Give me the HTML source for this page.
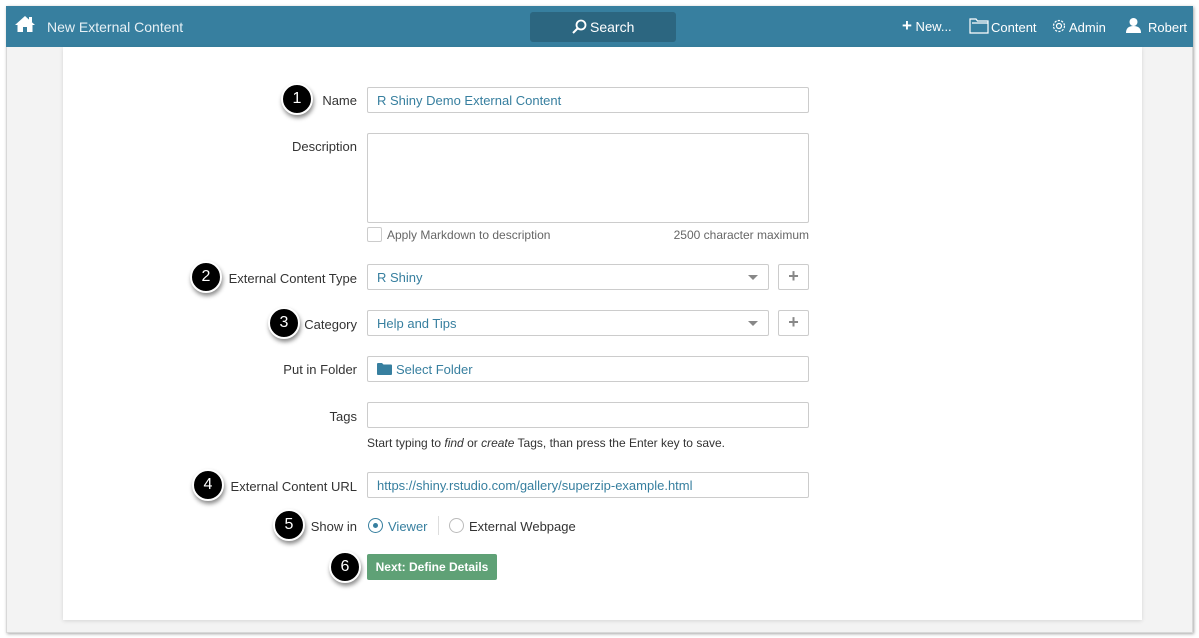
<!DOCTYPE html>
<html><head><meta charset="utf-8"><style>
*{box-sizing:border-box;margin:0;padding:0}
body{width:1199px;height:638px;background:#fff;font-family:"Liberation Sans",Arial,sans-serif;position:relative;overflow:hidden;font-size:13px;color:#333}
.win{position:absolute;left:6px;top:6px;width:1187px;height:627px;background:#f3f3f3;border:1px solid #d8d8d8;box-shadow:1px 1px 3px rgba(0,0,0,.35)}
.hdr{position:absolute;left:6px;top:6px;width:1187px;height:41px;background:#377f9f}
.card{position:absolute;left:63px;top:47px;width:1079px;height:573px;background:#fff;box-shadow:0 1px 4px rgba(0,0,0,.12)}
.a{position:absolute;white-space:nowrap}
.lbl{position:absolute;text-align:right;right:842px;font-size:13px;color:#333}
.inp{position:absolute;left:367px;width:442px;height:26px;border:1px solid #ccc;border-radius:2px;color:#377f9f;padding:5px 9px;font-size:13px}
.plus{position:absolute;left:778px;width:31px;height:26px;border:1px solid #ccc;border-radius:2px;color:#888;font-size:18px;font-weight:bold;text-align:center;line-height:23px}
.caret{position:absolute;right:10px;top:10px;width:0;height:0;border-left:5px solid transparent;border-right:5px solid transparent;border-top:5px solid #888}
.num{position:absolute;width:32px;height:32px;border-radius:50%;background:#000;border:2px solid #fff;box-shadow:1px 3px 4px rgba(0,0,0,.45);color:#fff;font-size:16px;text-align:center;line-height:28px}
.nav{color:#fff;font-size:13px}
</style></head><body>
<div class="win"></div>
<div class="hdr"></div>
<svg class="a" style="left:14px;top:15px" width="22" height="18" viewBox="0 0 22 18"><path d="M11 1 L1 10 L3.5 10 L3.5 17 L9 17 L9 12 L13 12 L13 17 L18.5 17 L18.5 10 L21 10 Z" fill="#fff"/><rect x="15" y="2" width="3" height="5" fill="#fff"/></svg>
<div class="a nav" style="left:47px;top:19px;font-size:14px;color:#e6f0f5">New External Content</div>
<div class="a" style="left:530px;top:12px;width:146px;height:30px;background:#2c6680;border-radius:3px"></div>
<svg class="a" style="left:571px;top:19px" width="16" height="16" viewBox="0 0 16 16"><circle cx="10" cy="6" r="4.5" fill="none" stroke="#fff" stroke-width="1.8"/><path d="M7 9 L2 14" stroke="#fff" stroke-width="2"/></svg>
<div class="a nav" style="left:590px;top:19px;font-size:14px">Search</div>
<div class="a nav" style="left:902px;top:19px"><b style="font-size:17px;line-height:12px">+</b> New...</div>
<svg class="a" style="left:969px;top:18px" width="20" height="16" viewBox="0 0 20 16"><path d="M1 1 H7 L8.5 3 H19 V15 H1 Z M3 5 H19" fill="none" stroke="#fff" stroke-width="1.2"/></svg>
<div class="a nav" style="left:991px;top:20px">Content</div>
<svg class="a" style="left:1051px;top:18px" width="16" height="16" viewBox="0 0 16 16"><circle cx="8" cy="8" r="2.5" fill="none" stroke="#fff" stroke-width="1.2"/><circle cx="8" cy="8" r="5.5" fill="none" stroke="#fff" stroke-width="1.2" stroke-dasharray="2.2 1.3"/></svg>
<div class="a nav" style="left:1069px;top:20px">Admin</div>
<svg class="a" style="left:1126px;top:17px" width="15" height="16" viewBox="0 0 15 16"><circle cx="7.5" cy="5" r="4" fill="#fff"/><path d="M0 16 Q0 9 7.5 9 Q15 9 15 16 Z" fill="#fff"/></svg>
<div class="a nav" style="left:1148px;top:20px">Robert</div>

<div class="card"></div>

<div class="lbl" style="top:93px">Name</div>
<div class="inp" style="top:87px">R Shiny Demo External Content</div>

<div class="lbl" style="top:139px">Description</div>
<div class="inp" style="top:133px;height:90px"></div>
<div class="a" style="left:367px;top:227px;width:15px;height:15px;border:1px solid #ccc;border-radius:2px"></div>
<div class="a" style="left:387px;top:228px;font-size:12px;color:#666">Apply Markdown to description</div>
<div class="a" style="right:390px;top:228px;font-size:12px;color:#666">2500 character maximum</div>

<div class="lbl" style="top:271px">External Content Type</div>
<div class="inp" style="top:264px;width:402px">R Shiny<div class="caret"></div></div>
<div class="plus" style="top:264px">+</div>

<div class="lbl" style="top:317px">Category</div>
<div class="inp" style="top:310px;width:402px">Help and Tips<div class="caret"></div></div>
<div class="plus" style="top:310px">+</div>

<div class="lbl" style="top:362px">Put in Folder</div>
<div class="inp" style="top:356px"><svg style="vertical-align:-1px;margin-right:4px" width="15" height="12" viewBox="0 0 15 12"><path d="M0 1 Q0 0 1 0 H5 L6.5 1.5 H14 Q15 1.5 15 2.5 V11 Q15 12 14 12 H1 Q0 12 0 11 Z" fill="#377f9f"/></svg>Select Folder</div>

<div class="lbl" style="top:409px">Tags</div>
<div class="inp" style="top:402px"></div>
<div class="a" style="left:367px;top:436px;font-size:12px;color:#333">Start typing to <i>find</i> or <i>create</i> Tags, than press the Enter key to save.</div>

<div class="lbl" style="top:479px">External Content URL</div>
<div class="inp" style="top:472px">https://shiny.rstudio.com/gallery/superzip-example.html</div>

<div class="lbl" style="top:519px">Show in</div>
<div class="a" style="left:368px;top:518px;width:15px;height:15px;border:1px solid #377f9f;border-radius:50%"><div style="position:absolute;left:4px;top:4px;width:5px;height:5px;border-radius:50%;background:#377f9f"></div></div>
<div class="a" style="left:388px;top:519px;color:#377f9f">Viewer</div>
<div class="a" style="left:438px;top:516px;width:1px;height:19px;background:#ddd"></div>
<div class="a" style="left:449px;top:518px;width:15px;height:15px;border:1px solid #bbb;border-radius:50%"></div>
<div class="a" style="left:469px;top:519px">External Webpage</div>

<div class="a" style="left:367px;top:554px;width:130px;height:26px;background:#5fa176;border-radius:2px;color:#fff;font-size:12px;font-weight:bold;text-align:center;line-height:26px">Next: Define Details</div>

<div class="num" style="left:281px;top:83px">1</div>
<div class="num" style="left:190px;top:261px">2</div>
<div class="num" style="left:268px;top:307px">3</div>
<div class="num" style="left:192px;top:469px">4</div>
<div class="num" style="left:273px;top:509px">5</div>
<div class="num" style="left:329px;top:551px">6</div>
</body></html>
